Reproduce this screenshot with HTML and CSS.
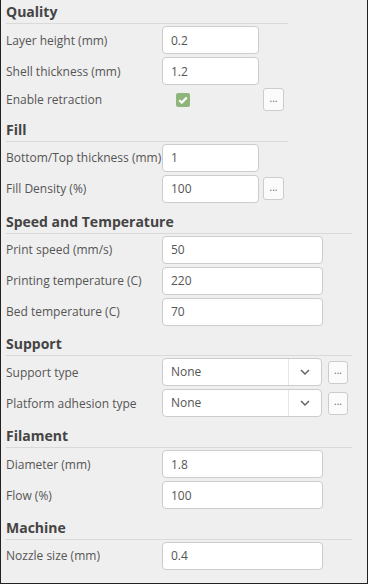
FILE: index.html
```html
<!DOCTYPE html>
<html lang="en">
<head>
    <meta charset="UTF-8">
    <meta name="viewport" content="width=device-width, initial-scale=1.0">
    <title>Print settings</title>
    <link rel="stylesheet" href="styles.css">
</head>
<body>
<div class="panel">

    <div class="section narrow">
        <h2 class="title">Quality</h2>
        <div class="rows">
            <label class="label">Layer height (mm)</label>
            <input type="text" class="field" value="0.2">
            <span></span>

            <label class="label">Shell thickness (mm)</label>
            <input type="text" class="field" value="1.2">
            <span></span>

            <label class="label">Enable retraction</label>
            <span class="check">
                <svg width="10" height="8" viewBox="0 0 10 8"><path d="M1.2 4.2 L3.8 6.6 L8.8 1.4" fill="none" stroke="#fff" stroke-width="2.2"/></svg>
            </span>
            <button class="more">...</button>
        </div>
    </div>

    <div class="section narrow">
        <h2 class="title">Fill</h2>
        <div class="rows">
            <label class="label">Bottom/Top thickness (mm)</label>
            <input type="text" class="field" value="1">
            <span></span>

            <label class="label">Fill Density (%)</label>
            <input type="text" class="field" value="100">
            <button class="more">...</button>
        </div>
    </div>

    <div class="section wide">
        <h2 class="title">Speed and Temperature</h2>
        <div class="rows">
            <label class="label">Print speed (mm/s)</label>
            <input type="text" class="field" value="50">
            <span></span>

            <label class="label">Printing temperature (C)</label>
            <input type="text" class="field" value="220">
            <span></span>

            <label class="label">Bed temperature (C)</label>
            <input type="text" class="field" value="70">
            <span></span>
        </div>
    </div>

    <div class="section wide">
        <h2 class="title">Support</h2>
        <div class="rows">
            <label class="label">Support type</label>
            <div class="select">
                <span class="select-value">None</span>
                <span class="select-arrow">
                    <svg width="10" height="6" viewBox="0 0 10 6"><path d="M1 1 L5 5 L9 1" fill="none" stroke="#666" stroke-width="1.5"/></svg>
                </span>
            </div>
            <button class="more">...</button>

            <label class="label">Platform adhesion type</label>
            <div class="select">
                <span class="select-value">None</span>
                <span class="select-arrow">
                    <svg width="10" height="6" viewBox="0 0 10 6"><path d="M1 1 L5 5 L9 1" fill="none" stroke="#666" stroke-width="1.5"/></svg>
                </span>
            </div>
            <button class="more">...</button>
        </div>
    </div>

    <div class="section wide">
        <h2 class="title">Filament</h2>
        <div class="rows">
            <label class="label">Diameter (mm)</label>
            <input type="text" class="field" value="1.8">
            <span></span>

            <label class="label">Flow (%)</label>
            <input type="text" class="field" value="100">
            <span></span>
        </div>
    </div>

    <div class="section wide">
        <h2 class="title">Machine</h2>
        <div class="rows">
            <label class="label">Nozzle size (mm)</label>
            <input type="text" class="field" value="0.4">
            <span></span>
        </div>
    </div>

</div>
</body>
</html>
```

FILE: styles.css
```css
html, body {
    margin: 0;
    padding: 0;
}
body {
    font-family: "Open Sans", "Noto Sans", sans-serif;
    background: #efefef;
    color: #555;
}
.panel {
    box-sizing: border-box;
    width: 368px;
    height: 584px;
    padding: 0 0 0 5px;
    border: 1px solid #222;
    border-top: none;
    overflow: hidden;
}
.section {
    margin-bottom: 6.75px;
}
.narrow {
    width: 282px;
}
.wide {
    width: 346px;
}
.title {
    margin: 0 0 2px 0;
    height: 23px;
    line-height: 23px;
    font-size: 14px;
    font-weight: 700;
    color: #444;
    border-bottom: 1px solid #d9d9d9;
}
.rows {
    display: grid;
    grid-template-columns: 156px 97px auto;
    row-gap: 3px;
    align-items: center;
    justify-items: start;
}
.wide .rows {
    grid-template-columns: 156px 161px auto;
}
.label {
    font-size: 12px;
    color: #555;
    white-space: nowrap;
}
.field {
    box-sizing: border-box;
    width: 100%;
    height: 28px;
    margin: 0;
    padding: 0 8px;
    font-family: "Open Sans", "Noto Sans", sans-serif;
    font-size: 12px;
    color: #555;
    background: #fff;
    border: 1px solid #ccc;
    border-radius: 4px;
    outline: none;
}
.check {
    display: flex;
    align-items: center;
    justify-content: center;
    width: 14px;
    height: 14px;
    margin-left: 14px;
    border-radius: 2px;
    background: #8fb67a;
}
.more {
    box-sizing: border-box;
    width: 21px;
    height: 23px;
    margin-left: 4px;
    padding: 0 0 4px 0;
    font-family: "Open Sans", "Noto Sans", sans-serif;
    font-size: 10px;
    color: #666;
    background: #fbfbfb;
    border: 1px solid #ccc;
    border-radius: 3px;
}
.wide .more {
    width: 20px;
    margin-left: 5px;
}
.select {
    box-sizing: border-box;
    display: flex;
    width: 160px;
    height: 28px;
    background: #fff;
    border: 1px solid #ccc;
    border-radius: 4px;
}
.select-value {
    flex: 1;
    padding-left: 8px;
    line-height: 26px;
    font-size: 12px;
    color: #555;
}
.select-arrow {
    display: flex;
    align-items: center;
    justify-content: center;
    width: 32px;
    border-left: 1px solid #e6e6e6;
}
```
